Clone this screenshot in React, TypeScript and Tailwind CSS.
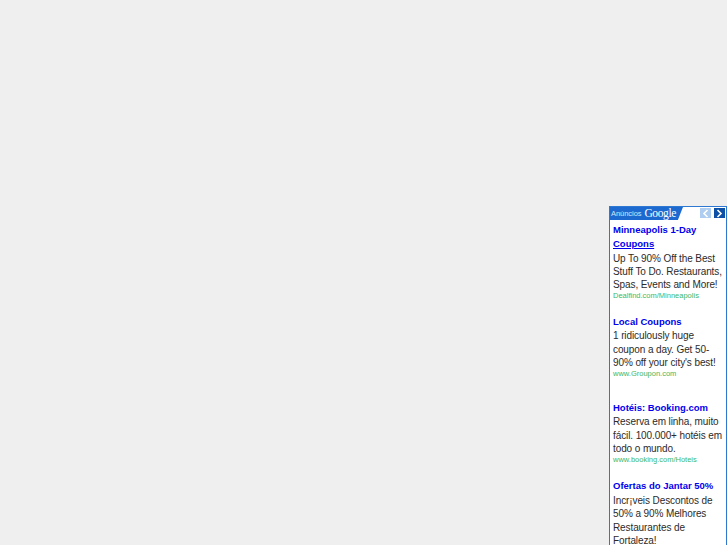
const ads = [
  {
    title: ['Minneapolis 1-Day', 'Coupons'],
    underline: true,
    body: ['Up To 90% Off the Best', 'Stuff To Do. Restaurants,', 'Spas, Events and More!'],
    url: 'Dealfind.com/Minneapolis',
    gap: 'mb-[13.5px]',
  },
  {
    title: ['Local Coupons'],
    body: ['1 ridiculously huge', 'coupon a day. Get 50-', "90% off your city's best!"],
    url: 'www.Groupon.com',
    gap: 'mb-[21.5px]',
  },
  {
    title: ['Hotéis: Booking.com'],
    body: ['Reserva em linha, muito', 'fácil. 100.000+ hotéis em', 'todo o mundo.'],
    url: 'www.booking.com/Hoteis',
    gap: 'mb-[14px]',
  },
  {
    title: ['Ofertas do Jantar 50%'],
    body: ['Incr¡veis Descontos de', '50% a 90% Melhores', 'Restaurantes de', 'Fortaleza!'],
    gap: '',
  },
]

function Ad({ ad }: { ad: (typeof ads)[number] }) {
  return (
    <div className={ad.gap}>
      {ad.title.map((t, i) => (
        <div
          key={t}
          className={`h-[14px] text-[9.5px] leading-[14px] font-bold text-[#0000ee] whitespace-nowrap ${
            ad.underline && i === 1 ? 'underline' : ''
          }`}
        >
          {t}
        </div>
      ))}
      <div className="pt-[0.5px]">
        {ad.body.map((t) => (
          <div key={t} className="h-[13.33px] text-[10px] leading-[13.33px] tracking-[-0.1px] text-[#2b2b2b] whitespace-nowrap">
            {t}
          </div>
        ))}
      </div>
      {ad.url && (
        <div className="h-[10px] text-[7.5px] leading-[10px] text-[#3cb868] whitespace-nowrap">{ad.url}</div>
      )}
    </div>
  )
}

export default function App() {
  return (
    <div className="h-[545px] overflow-hidden bg-[#efefef] flex justify-end pt-[206px] font-['Liberation_Sans',Arial,sans-serif]">
      <div className="w-[118px] h-[339px] bg-white border-x border-t border-[#2f78d2] overflow-hidden">
        <div className="h-[13px] flex items-start justify-between bg-white">
          <div className="h-[13px] w-[73px] bg-[#1c6ad0] flex items-center pl-[1px] gap-[3px] text-white whitespace-nowrap [clip-path:polygon(0_0,100%_0,93%_100%,0_100%)]">
            <span className="text-[7.5px] leading-none text-[#d5e4f7] tracking-[-0.05px]">Anúncios</span>
            <span className="text-[11.5px] leading-none font-['Liberation_Serif',serif] tracking-[-0.4px]">Google</span>
          </div>
          <div className="flex gap-[3px] pr-[1px] pt-[1px]">
            <div className="w-[11px] h-[10px] bg-[#aecdf0] flex items-center justify-center">
              <svg width="7" height="9" viewBox="0 0 7 9" fill="none" stroke="#ffffff" strokeWidth="1.6">
                <path d="M5.5 1 L2 4.5 L5.5 8" />
              </svg>
            </div>
            <div className="w-[11px] h-[10px] bg-[#0d50a8] flex items-center justify-center">
              <svg width="7" height="9" viewBox="0 0 7 9" fill="none" stroke="#ffffff" strokeWidth="1.6">
                <path d="M1.5 1 L5 4.5 L1.5 8" />
              </svg>
            </div>
          </div>
        </div>
        <div className="pl-[3px] pt-[3px]">
          {ads.map((ad) => (
            <Ad key={ad.title[0]} ad={ad} />
          ))}
        </div>
      </div>
    </div>
  )
}
